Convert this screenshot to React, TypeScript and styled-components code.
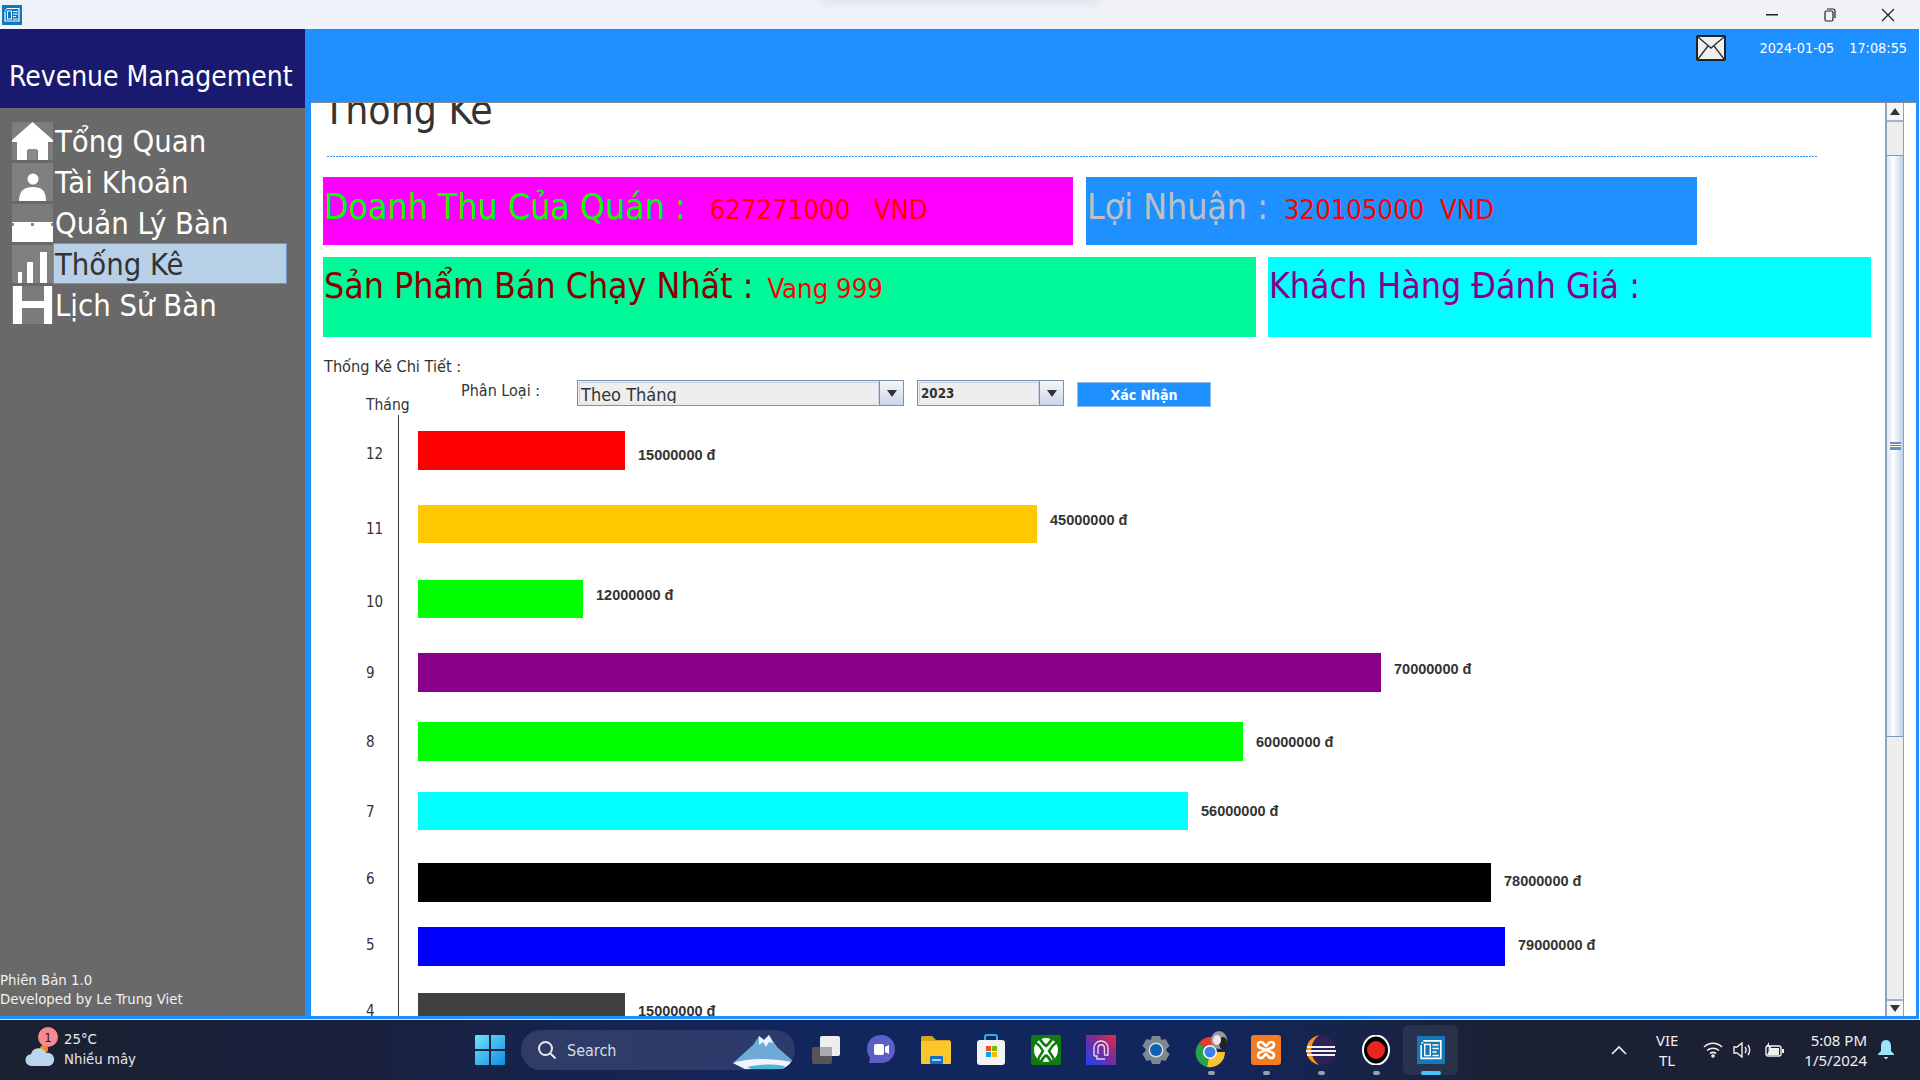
import React from 'react';
import styled, { createGlobalStyle } from 'styled-components';

const GlobalStyle = createGlobalStyle`
    html, body {
        margin: 0;
        padding: 0;
        background: #fff;
    }
    * {
        box-sizing: border-box;
    }
`;

const Page = styled.div`
    width: 1920px;
    height: 1080px;
    display: flex;
    flex-direction: column;
    overflow: hidden;
    font-family: 'DejaVu Sans', Verdana, sans-serif;
    font-stretch: condensed;
    color: #333;
`;

const TitleBar = styled.div`
    position: relative;
    height: 29px;
    flex: none;
    display: flex;
    align-items: center;
    justify-content: space-between;
    padding: 0 3px 0 2px;
    background: linear-gradient(90deg, #eef2fb 0%, #eef2fb 52%, #f1f2f7 60%, #f1f2f7 100%);
`;

// soft shadow of a window that hangs over the top of the screen
const TitleShadow = styled.div`
    position: absolute;
    top: -6px;
    left: 825px;
    width: 270px;
    height: 6px;
    box-shadow: 0 2px 6px 3px rgba(90, 90, 90, 0.07);
`;

const WindowButtons = styled.div`
    display: flex;
`;

const WindowButton = styled.div`
    width: 58px;
    height: 29px;
    display: flex;
    align-items: center;
    justify-content: center;
`;

const Main = styled.div`
    flex: 1;
    min-height: 0;
    display: flex;
    background: #1e90ff;
    padding-bottom: 3px;
    border-bottom: 1px solid #d8dde6;
    border-right: 1px solid #fff;
`;

const Sidebar = styled.div`
    width: 305px;
    flex: none;
    display: flex;
    flex-direction: column;
    background: #696969;
`;

const Brand = styled.div`
    height: 79px;
    flex: none;
    display: flex;
    align-items: center;
    padding: 15px 0 0 9px;
    background: #191970;
    color: #fff;
    font-size: 28px;
`;

const Nav = styled.div`
    flex: 1;
    display: flex;
    flex-direction: column;
    padding: 12px 0 0 12px;
`;

const NavRow = styled.div`
    height: 41px;
    display: flex;
    align-items: center;
`;

const NavLabel = styled.div<{ $selected?: boolean }>`
    width: 234px;
    height: 41px;
    padding-left: 1px;
    line-height: 42px;
    font-size: 30.7px;
    white-space: nowrap;
    color: ${(p) => (p.$selected ? '#333' : '#fff')};
    background: ${(p) => (p.$selected ? '#b8cfe8' : 'transparent')};
    border: 1px solid ${(p) => (p.$selected ? '#6f93c9' : 'transparent')};
`;

const SidebarFooter = styled.div`
    padding-bottom: 8px;
    color: #f2f2f2;
    font-size: 14.8px;
    line-height: 19px;
`;

const Workspace = styled.div`
    flex: 1;
    min-width: 0;
    display: flex;
    flex-direction: column;
`;

const TopBar = styled.div`
    height: 73px;
    flex: none;
    display: flex;
    align-items: flex-start;
    justify-content: flex-end;
    padding: 6px 12px 0 0;
    background: #1e90ff;
    color: #fff;
    font-size: 14.3px;
`;

const Clock = styled.div`
    display: flex;
    gap: 15px;
    margin: 5px 0 0 33px;
    white-space: nowrap;
`;

const ContentFrame = styled.div`
    flex: 1;
    min-height: 0;
    display: flex;
    margin: 0 3px 0 6px;
    background: #fff;
    border-top: 1px solid #8a8a8a;
    padding-right: 12px;
`;

const Viewport = styled.div`
    flex: 1;
    min-width: 0;
    overflow: hidden;
`;

const ScrollTrack = styled.div`
    width: 19px;
    flex: none;
    display: flex;
    flex-direction: column;
    background: #eee;
    border-left: 2px solid #8fa3c2;
    border-right: 1px solid #8f9fb5;
`;

const ScrollArrow = styled.div<{ $height: number }>`
    height: ${(p) => p.$height}px;
    flex: none;
    display: flex;
    align-items: center;
    justify-content: center;
    background: #f4f6f9;
    border-bottom: 2px solid #a3b2c9;
    &:last-child {
        border-bottom: none;
        border-top: 2px solid #a3b2c9;
    }
`;

const ScrollGap = styled.div<{ $grow?: boolean }>`
    height: 33px;
    flex: ${(p) => (p.$grow ? 1 : 'none')};
    background: #eeeeee;
`;

const ScrollThumb = styled.div`
    height: 582px;
    flex: none;
    display: flex;
    align-items: center;
    justify-content: center;
    background: linear-gradient(90deg, #d9e6f6 0%, #ffffff 40%, #bcd0e8 100%);
    border-top: 1px solid #7f97bd;
    border-bottom: 1px solid #7f97bd;
`;

const ScrollGrip = styled.div`
    width: 11px;
    height: 8px;
    background: linear-gradient(#6d8cc8 2px, #fff 2px, #fff 3px, #4f78c0 3px, #4f78c0 4px, #fff 4px, #fff 5px, #6d8cc8 5px, #6d8cc8 8px);
`;

const PageTitle = styled.h1`
    margin: -16px 0 0 12px;
    height: 46px;
    line-height: 46px;
    font-size: 40.5px;
    font-weight: 400;
    color: #333;
`;

const Divider = styled.div`
    width: 1491px;
    margin: 23px 0 0 16px;
    height: 1px;
    background: repeating-linear-gradient(90deg, #1e90ff 0, #1e90ff 2px, #fff 2px, #fff 3px);
`;

const CardRow = styled.div<{ $top: number; $gap: number }>`
    display: flex;
    gap: ${(p) => p.$gap}px;
    margin: ${(p) => p.$top}px 0 0 12px;
`;

const Card = styled.div<{ $bg: string; $width: number; $height: number; $pad: number }>`
    width: ${(p) => p.$width}px;
    height: ${(p) => p.$height}px;
    flex: none;
    display: flex;
    align-items: baseline;
    padding: ${(p) => p.$pad}px 0 0 1px;
    background: ${(p) => p.$bg};
    white-space: pre;
`;

const CardTitle = styled.span<{ $color: string }>`
    font-size: 35.4px;
    line-height: 44px;
    color: ${(p) => p.$color};
`;

const CardValue = styled.span<{ $indent: number }>`
    margin-left: ${(p) => p.$indent}px;
    font-size: 27.3px;
    color: #f00;
`;

const DetailHeading = styled.div`
    margin: 20px 0 0 13px;
    font-size: 16.2px;
    line-height: 20px;
    color: #333;
`;

const FilterRow = styled.div`
    height: 35px;
    display: flex;
    margin-top: 3px;
`;

const MonthHeading = styled.div`
    width: 95px;
    margin-left: 55px;
    padding-top: 15px;
    font-size: 15.5px;
    line-height: 20px;
`;

const FilterLabel = styled.div`
    width: 116px;
    padding-top: 1px;
    font-size: 16px;
    line-height: 20px;
`;

const Combo = styled.div<{ $width: number }>`
    width: ${(p) => p.$width}px;
    height: 26px;
    flex: none;
    display: flex;
    margin-right: 13px;
    border: 1px solid #7f8fa9;
    background: #eee;
`;

const ComboText = styled.div<{ $bold?: boolean }>`
    flex: 1;
    overflow: hidden;
    margin: 1px 0 0 1px;
    padding-left: 1px;
    border: 1px solid #c8d3e3;
    border-bottom-color: #dfe6ef;
    font-size: ${(p) => (p.$bold ? '13.3px' : '18px')};
    font-weight: ${(p) => (p.$bold ? 700 : 400)};
    line-height: ${(p) => (p.$bold ? '21px' : '23px')};
    height: 22px;
    color: #333;
`;

const ComboArrow = styled.div`
    width: 24px;
    flex: none;
    display: flex;
    align-items: center;
    justify-content: center;
    background: linear-gradient(#f5f7fa, #c9d7ea);
    border-left: 1px solid #7f8fa9;
`;

const ConfirmButton = styled.div`
    width: 134px;
    height: 25px;
    margin-top: 2px;
    display: flex;
    align-items: center;
    justify-content: center;
    background: #1e90ff;
    border: 1px solid #8fb8e8;
    color: #fff;
    font-size: 14px;
    font-weight: 700;
`;

const ChartRow = styled.div`
    display: flex;
    margin-left: 55px;
`;

const MonthCell = styled.div<{ $gap: number; $height: number }>`
    width: 32px;
    flex: none;
    padding-top: ${(p) => p.$gap}px;
    height: ${(p) => p.$gap + p.$height}px;
    display: flex;
    align-items: center;
`;

const MonthText = styled.span<{ $shift: number }>`
    margin-top: ${(p) => p.$shift * 2}px;
    font-size: 15px;
    color: #333;
`;

const BarCell = styled.div<{ $gap: number }>`
    flex: 1;
    display: flex;
    align-items: center;
    padding: ${(p) => p.$gap}px 0 0 19px;
    border-left: 1px solid #333;
`;

const Bar = styled.div<{ $color: string; $height: number }>`
    height: ${(p) => p.$height}px;
    flex: none;
    background: ${(p) => p.$color};
`;

const BarValue = styled.span<{ $shift: number }>`
    margin: ${(p) => p.$shift * 2}px 0 0 13px;
    font-family: 'Liberation Sans', Arial, sans-serif;
    font-size: 14.5px;
    font-weight: 700;
    color: #333;
    white-space: nowrap;
`;

const Taskbar = styled.div`
    height: 60px;
    flex: none;
    display: flex;
    align-items: center;
    background: linear-gradient(90deg, #1b2131 0%, #1a2140 20%, #12265e 42%, #12265e 62%, #1b2236 78%, #1b2131 100%);
    color: #fff;
`;

const Weather = styled.div`
    width: 475px;
    flex: none;
    display: flex;
    align-items: center;
    padding-left: 25px;
`;

const WeatherIcon = styled.div`
    position: relative;
    width: 30px;
    height: 30px;
    margin: 4px 9px 0 0;
`;

const Badge = styled.div`
    position: absolute;
    top: -10px;
    left: 13px;
    width: 20px;
    height: 20px;
    border-radius: 50%;
    display: flex;
    align-items: center;
    justify-content: center;
    background: #f78a8f;
    color: #222;
    font-size: 13px;
`;

const WeatherText = styled.div`
    font-size: 14.8px;
    line-height: 20px;
    margin-top: -2px;
    color: #e8e8e8;
`;

const SearchBox = styled.div`
    width: 274px;
    height: 40px;
    flex: none;
    display: flex;
    align-items: center;
    margin-left: 16px;
    padding-left: 16px;
    border-radius: 20px;
    background: linear-gradient(90deg, #303c66, #2c3a6c);
    font-size: 16px;
    color: #d8dbe6;
    overflow: hidden;
`;

const SearchLabel = styled.span`
    flex: 1;
    margin-left: 10px;
`;

const AppSlot = styled.div<{ $active?: boolean }>`
    position: relative;
    width: 55px;
    height: 50px;
    flex: none;
    display: flex;
    align-items: center;
    justify-content: center;
    border-radius: 6px;
    background: ${(p) => (p.$active ? 'rgba(255,255,255,0.07)' : 'transparent')};
`;

const RunDot = styled.div<{ $active?: boolean }>`
    position: absolute;
    bottom: 0;
    left: 50%;
    width: ${(p) => (p.$active ? 20 : 7)}px;
    height: 4px;
    margin-left: ${(p) => (p.$active ? -10 : -3)}px;
    border-radius: 2px;
    background: ${(p) => (p.$active ? '#4cc2ff' : '#9aa0ab')};
`;

const AppStrip = styled.div`
    display: flex;
    margin-left: 3px;
`;

const Tray = styled.div`
    flex: 1;
    display: flex;
    align-items: center;
    justify-content: flex-end;
    font-size: 15px;
    color: #f0f0f0;
`;

const TrayItem = styled.div<{ $right: number }>`
    display: flex;
    align-items: center;
    margin-right: ${(p) => p.$right}px;
`;

const Lang = styled.div`
    text-align: center;
    line-height: 20px;
    font-family: 'Noto Sans', sans-serif;
`;

const DateTime = styled.div`
    text-align: right;
    line-height: 20px;
    font-family: 'Noto Sans', sans-serif;
`;

const appIcon = (size: number) => (
    <svg width={size} height={size} viewBox="0 0 20 20">
        <rect width="20" height="20" fill="#0f79b9" />
        <path d="M3 5h1.5M4.5 3.5H17V16H3V6.5" fill="none" stroke="#fff" strokeWidth="1.2" />
        <rect x="5.5" y="6" width="4" height="8" fill="none" stroke="#fff" strokeWidth="1" />
        <path d="M11 6.5h4.5M11 9h4.5M11 11.5h3M11 14h4.5" stroke="#fff" strokeWidth="1.1" />
    </svg>
);

const NavIcon: React.FC<{ children: React.ReactNode }> = ({ children }) => (
    <svg width="41" height="38" viewBox="0 0 41 38" style={{ flex: 'none' }}>
        {children}
    </svg>
);

const navItems = [
    {
        label: 'Tổng Quan',
        icon: (
            <>
                <rect width="41" height="38" fill="#7d7d7d" />
                <path d="M0 18 20.5 0 41 18v2h-5v18H26V28H15v10H5V20H0z" fill="#fff" />
                <rect x="16" y="27" width="9" height="11" fill="#8a8a8a" />
            </>
        ),
    },
    {
        label: 'Tài Khoản',
        icon: (
            <>
                <rect width="41" height="38" fill="#808080" />
                <circle cx="21" cy="16" r="5.5" fill="#fff" />
                <path d="M7 38c0-11 6-14 14-14s13 3 13 14z" fill="#fff" />
            </>
        ),
    },
    {
        label: 'Quản Lý Bàn',
        icon: (
            <>
                <rect width="41" height="18" fill="#7b7b7b" />
                <rect y="18" width="41" height="20" fill="#fff" />
                <path d="M0 19h2v3H0zM19 19h3v3h-3zM39 19h2v3h-2z" fill="#888" />
            </>
        ),
    },
    {
        label: 'Thống Kê',
        selected: true,
        icon: (
            <>
                <rect width="41" height="38" fill="#808080" />
                <rect x="6" y="27" width="4" height="11" fill="#fff" />
                <rect x="15" y="17" width="6" height="21" fill="#fff" />
                <rect x="28" y="7" width="7" height="31" fill="#fff" />
            </>
        ),
    },
    {
        label: 'Lịch Sử Bàn',
        icon: (
            <>
                <rect width="41" height="38" fill="#7b7b7b" />
                <path d="M1 0h9v15h22V0h8v38h-8V22H10v16H1z" fill="#fff" />
            </>
        ),
    },
];

interface IBarRow {
    month: number;
    value: string;
    color: string;
    width: number;
    gap: number;
    height: number;
    monthShift: number;
    valueShift: number;
}

const barRows: IBarRow[] = [
    { month: 12, value: '15000000 đ', color: '#ff0000', width: 207, gap: 16, height: 39, monthShift: 3, valueShift: 4 },
    { month: 11, value: '45000000 đ', color: '#ffc800', width: 619, gap: 35, height: 38, monthShift: 5, valueShift: -4 },
    { month: 10, value: '12000000 đ', color: '#00ff00', width: 165, gap: 37, height: 38, monthShift: 3, valueShift: -4 },
    { month: 9, value: '70000000 đ', color: '#8b008b', width: 963, gap: 35, height: 39, monthShift: 0, valueShift: -4 },
    { month: 8, value: '60000000 đ', color: '#00ff00', width: 825, gap: 30, height: 39, monthShift: 0, valueShift: 0 },
    { month: 7, value: '56000000 đ', color: '#00ffff', width: 770, gap: 31, height: 38, monthShift: 1, valueShift: 0 },
    { month: 6, value: '78000000 đ', color: '#000000', width: 1073, gap: 33, height: 39, monthShift: -4, valueShift: -2 },
    { month: 5, value: '79000000 đ', color: '#0000ff', width: 1087, gap: 25, height: 39, monthShift: -2, valueShift: -2 },
    { month: 4, value: '15000000 đ', color: '#404040', width: 207, gap: 27, height: 39, monthShift: -2, valueShift: -2 },
];

const ArrowDown: React.FC<{ size?: number; color?: string }> = ({ size = 10, color = '#333' }) => (
    <svg width={size} height={size * 0.7} viewBox="0 0 10 7">
        <path d="M0 0h10L5 7z" fill={color} />
    </svg>
);

const taskbarApps: { key: string; running?: boolean; active?: boolean; icon: React.ReactNode }[] = [
    {
        key: 'desktops',
        icon: (
            <svg width="30" height="30" viewBox="0 0 30 30">
                <rect x="1" y="12" width="20" height="17" rx="2" fill="#555" />
                <rect x="9" y="1" width="20" height="20" rx="2" fill="#eee" />
                <rect x="9" y="12" width="12" height="9" fill="#aaa" />
            </svg>
        ),
    },
    {
        key: 'meet',
        icon: (
            <svg width="30" height="32" viewBox="0 0 30 32">
                <path d="M15 1c8 0 14 6 14 14s-6 14-14 14H3l1-5C2 21 1 18 1 15 1 7 7 1 15 1z" fill="#5b5fc7" />
                <rect x="8" y="10" width="10" height="11" rx="2" fill="#fff" />
                <path d="m19 13 4-2v9l-4-2z" fill="#fff" />
            </svg>
        ),
    },
    {
        key: 'files',
        icon: (
            <svg width="32" height="30" viewBox="0 0 32 30">
                <path d="M1 3a2 2 0 0 1 2-2h9l4 4h14v5H1z" fill="#d9a520" />
                <rect x="1" y="6" width="30" height="23" rx="1" fill="#fcc72a" />
                <rect x="10" y="21" width="13" height="8" rx="1" fill="#1570c4" />
                <rect x="12" y="24" width="9" height="2" fill="#9fd0f5" />
            </svg>
        ),
    },
    {
        key: 'store',
        icon: (
            <svg width="30" height="32" viewBox="0 0 30 32">
                <path d="M9 9V3a2 2 0 0 1 2-2h8a2 2 0 0 1 2 2v6" fill="none" stroke="#2bb0e8" strokeWidth="2" />
                <rect x="1" y="6" width="28" height="25" rx="3" fill="#f3f3f3" />
                <rect x="10" y="12" width="5" height="5" fill="#f25022" />
                <rect x="16" y="12" width="5" height="5" fill="#7fba00" />
                <rect x="10" y="18" width="5" height="5" fill="#00a4ef" />
                <rect x="16" y="18" width="5" height="5" fill="#ffb900" />
            </svg>
        ),
    },
    {
        key: 'xbox',
        icon: (
            <svg width="30" height="30" viewBox="0 0 30 30">
                <rect width="30" height="30" rx="2" fill="#107c10" />
                <circle cx="15" cy="15" r="12" fill="#fff" />
                <path d="M7 1c3 5 5 8 8 10 3-2 5-5 8-10M4 7c3 2 6 5 8 9-3 4-5 8-6 12M26 7c-3 2-6 5-8 9 3 4 5 8 6 12M15 20c-3 3-5 5-6 9M15 20c3 3 5 5 6 9" fill="none" stroke="#107c10" strokeWidth="2.6" />
            </svg>
        ),
    },
    {
        key: 'studio',
        icon: (
            <svg width="30" height="30" viewBox="0 0 30 30">
                <defs>
                    <linearGradient id="studioBg" x1="0" y1="1" x2="1" y2="0">
                        <stop offset="0" stopColor="#1f45f0" />
                        <stop offset="0.55" stopColor="#7a2c9a" />
                        <stop offset="1" stopColor="#f0283c" />
                    </linearGradient>
                </defs>
                <rect width="30" height="30" fill="url(#studioBg)" />
                <path d="M8 21V13a7 7 0 0 1 14 0v7h-4M8 21h3v3h8" fill="none" stroke="#e9d8ef" strokeWidth="1.4" />
                <path d="M12 19v-6a3.200 3.200 0 0 1 6.400 0v6" fill="none" stroke="#e9d8ef" strokeWidth="1.4" />
            </svg>
        ),
    },
    {
        key: 'settings',
        icon: (
            <svg width="30" height="30" viewBox="0 0 30 30">
                <path d="M11 1h8l1.500 4 4-1 4 7-3 3v2l3 3-4 7-4-1-1.500 4h-8l-1.500-4-4 1-4-7 3-3v-2l-3-3 4-7 4 1z" fill="#7d8791" />
                <circle cx="15" cy="15" r="7.500" fill="#d5dde4" />
                <circle cx="15" cy="15" r="6" fill="#0f62b0" />
            </svg>
        ),
    },
    {
        key: 'chrome',
        running: true,
        icon: (
            <svg width="32" height="38" viewBox="0 0 32 38">
                <g transform="translate(0 6)">
                    <path d="M15 15 4 6a15 15 0 0 1 25 1z" fill="#e33b2e" />
                    <path d="M15 15 4 6a15 15 0 0 0 8 24z" fill="#2aa24a" />
                    <path d="M15 15h15a15 15 0 0 1-18 15z" fill="#fbc02d" />
                    <circle cx="15" cy="15" r="7" fill="#fff" />
                    <circle cx="15" cy="15" r="5.500" fill="#3f80e8" />
                </g>
                <ellipse cx="24" cy="9" rx="8" ry="9" fill="#999" />
                <ellipse cx="28" cy="12" rx="4" ry="6" fill="#222" />
                <ellipse cx="22" cy="9" rx="4" ry="5" fill="#e8e8e8" />
            </svg>
        ),
    },
    {
        key: 'xampp',
        running: true,
        icon: (
            <svg width="30" height="30" viewBox="0 0 30 30">
                <rect width="30" height="30" rx="3" fill="#f37b20" />
                <path d="M10 7c-4 0-4 5 0 6l5 2 5-2c4-1 4-6 0-6-3 0-3 3-5 4-2-1-2-4-5-4zM10 23c-4 0-4-5 0-6l5-2 5 2c4 1 4 6 0 6-3 0-3-3-5-4-2 1-2 4-5 4z" fill="none" stroke="#fff" strokeWidth="2.6" />
            </svg>
        ),
    },
    {
        key: 'eclipse',
        running: true,
        icon: (
            <svg width="32" height="30" viewBox="0 0 32 30">
                <circle cx="16" cy="15" r="15" fill="#2c2255" />
                <path d="M14 0.200A15 15 0 0 0 14 29.800 18 18 0 0 1 14 .2z" fill="#f7941e" />
                <path d="M2 11h28v2H2zM1 15h30v2H1zM2 19h28v2H2z" fill="#f2f2f2" />
            </svg>
        ),
    },
    {
        key: 'record',
        running: true,
        icon: (
            <svg width="28" height="30" viewBox="0 0 28 30">
                <ellipse cx="14" cy="15" rx="13" ry="14.500" fill="#000" stroke="#fff" strokeWidth="2" />
                <circle cx="14" cy="15" r="9" fill="#e8251f" />
            </svg>
        ),
    },
    { key: 'revenue', active: true, icon: appIcon(28) },
];

const App: React.FC = () => {
    return (
        <Page>
            <GlobalStyle />
            <TitleBar>
                <TitleShadow />
                {appIcon(20)}
                <WindowButtons>
                    <WindowButton>
                        <svg width="12" height="2" viewBox="0 0 12 2">
                            <rect width="12" height="1.500" fill="#222" />
                        </svg>
                    </WindowButton>
                    <WindowButton>
                        <svg width="12" height="14" viewBox="0 0 12 14" fill="none" stroke="#222" strokeWidth="1.2">
                            <rect x="1" y="3" width="8" height="10" rx="1.500" />
                            <path d="M3 1h6a2 2 0 0 1 2 2v7" />
                        </svg>
                    </WindowButton>
                    <WindowButton>
                        <svg width="14" height="14" viewBox="0 0 14 14" stroke="#222" strokeWidth="1.2">
                            <path d="M1 1l12 12M13 1 1 13" />
                        </svg>
                    </WindowButton>
                </WindowButtons>
            </TitleBar>

            <Main>
                <Sidebar>
                    <Brand>Revenue Management</Brand>
                    <Nav>
                        {navItems.map((item) => (
                            <NavRow key={item.label}>
                                <NavIcon>{item.icon}</NavIcon>
                                <NavLabel $selected={item.selected}>{item.label}</NavLabel>
                            </NavRow>
                        ))}
                    </Nav>
                    <SidebarFooter>
                        Phiên Bản 1.0
                        <br />
                        Developed by Le Trung Viet
                    </SidebarFooter>
                </Sidebar>

                <Workspace>
                    <TopBar>
                        <svg width="30" height="26" viewBox="0 0 30 26">
                            <rect x="1" y="1" width="28" height="24" rx="1" fill="#f0f0f0" stroke="#222" strokeWidth="2" />
                            <path d="M2 2 15 13 28 2M2 24l10-13M28 24 18 11" fill="none" stroke="#333" strokeWidth="1.4" />
                        </svg>
                        <Clock>
                            <span>2024-01-05</span>
                            <span>17:08:55</span>
                        </Clock>
                    </TopBar>

                    <ContentFrame>
                        <Viewport>
                            <PageTitle>Thống Kê</PageTitle>
                            <Divider />
                            <CardRow $top={20} $gap={13}>
                                <Card $bg="#ff00ff" $width={750} $height={68} $pad={8}>
                                    <CardTitle $color="#00ff00">Doanh Thu Của Quán :</CardTitle>
                                    <CardValue $indent={24}>627271000   VND</CardValue>
                                </Card>
                                <Card $bg="#1e90ff" $width={611} $height={68} $pad={8}>
                                    <CardTitle $color="#c0c0c0">Lợi Nhuận :</CardTitle>
                                    <CardValue $indent={16}>320105000  VND</CardValue>
                                </Card>
                            </CardRow>
                            <CardRow $top={12} $gap={12}>
                                <Card $bg="#00fa9a" $width={933} $height={80} $pad={7}>
                                    <CardTitle $color="#8b0000">Sản Phẩm Bán Chạy Nhất :</CardTitle>
                                    <CardValue $indent={14}>Vang 999</CardValue>
                                </Card>
                                <Card $bg="#00ffff" $width={603} $height={80} $pad={7}>
                                    <CardTitle $color="#8b008b">Khách Hàng Đánh Giá :</CardTitle>
                                </Card>
                            </CardRow>

                            <DetailHeading>Thống Kê Chi Tiết :</DetailHeading>
                            <FilterRow>
                                <MonthHeading>Tháng</MonthHeading>
                                <FilterLabel>Phân Loại :</FilterLabel>
                                <Combo $width={327}>
                                    <ComboText>Theo Tháng</ComboText>
                                    <ComboArrow>
                                        <ArrowDown />
                                    </ComboArrow>
                                </Combo>
                                <Combo $width={147}>
                                    <ComboText $bold>2023</ComboText>
                                    <ComboArrow>
                                        <ArrowDown />
                                    </ComboArrow>
                                </Combo>
                                <ConfirmButton>Xác Nhận</ConfirmButton>
                            </FilterRow>

                            {barRows.map((row) => (
                                <ChartRow key={row.month}>
                                    <MonthCell $gap={row.gap} $height={row.height}>
                                        <MonthText $shift={row.monthShift}>{row.month}</MonthText>
                                    </MonthCell>
                                    <BarCell $gap={row.gap}>
                                        <Bar $color={row.color} $height={row.height} style={{ width: row.width }} />
                                        <BarValue $shift={row.valueShift}>{row.value}</BarValue>
                                    </BarCell>
                                </ChartRow>
                            ))}
                        </Viewport>

                        <ScrollTrack>
                            <ScrollArrow $height={19}>
                                <svg width="10" height="7" viewBox="0 0 10 7">
                                    <path d="M0 7h10L5 0z" fill="#333" />
                                </svg>
                            </ScrollArrow>
                            <ScrollGap />
                            <ScrollThumb>
                                <ScrollGrip />
                            </ScrollThumb>
                            <ScrollGap $grow />
                            <ScrollArrow $height={17}>
                                <ArrowDown />
                            </ScrollArrow>
                        </ScrollTrack>
                    </ContentFrame>
                </Workspace>
            </Main>

            <Taskbar>
                <Weather>
                    <WeatherIcon>
                        <svg width="30" height="22" viewBox="0 0 30 22" style={{ marginTop: 8 }}>
                            <circle cx="19" cy="4" r="4" fill="#f08a24" />
                            <path d="M7 21a6 6 0 0 1-1-12 8 8 0 0 1 15-1 6.500 6.500 0 0 1 3 13z" fill="#bcd5ef" />
                        </svg>
                        <Badge>1</Badge>
                    </WeatherIcon>
                    <WeatherText>
                        25°C
                        <br />
                        Nhiều mây
                    </WeatherText>
                </Weather>
                <svg width="30" height="30" viewBox="0 0 30 30">
                    <defs>
                        <linearGradient id="winLogo" x1="0" y1="0" x2="1" y2="1">
                            <stop offset="0" stopColor="#6fe3fb" />
                            <stop offset="1" stopColor="#0f8fe0" />
                        </linearGradient>
                    </defs>
                    <path d="M0 1a1 1 0 0 1 1-1h13v14H0zM16 0h13a1 1 0 0 1 1 1v13H16zM0 16h14v14H1a1 1 0 0 1-1-1zM16 16h14v13a1 1 0 0 1-1 1H16z" fill="url(#winLogo)" />
                </svg>
                <SearchBox>
                    <svg width="20" height="20" viewBox="0 0 20 20" fill="none" stroke="#e8e8e8" strokeWidth="2">
                        <circle cx="8.500" cy="8.500" r="6.500" />
                        <path d="m13.500 13.500 5 5" />
                    </svg>
                    <SearchLabel>Search</SearchLabel>
                    <svg width="64" height="38" viewBox="0 0 64 38">
                        <path d="M2 32 22 14l6-9 5 4 5-5 8 12 16 14-10 8H14z" fill="#6fa9d6" />
                        <path d="m28 5 5 4 5-5 4 8-4-1-3 5-3-5-4 3z" fill="#eaf4fb" />
                        <path d="M2 32c16-5 34-5 60-1l-8 7H14z" fill="#f0f6fb" />
                        <path d="M16 36c10-3 24-3 38-1l-3 3H20z" fill="#4fb5d8" />
                    </svg>
                </SearchBox>
                <AppStrip>
                    {taskbarApps.map((app) => (
                        <AppSlot key={app.key} $active={app.active}>
                            {app.icon}
                            {(app.running || app.active) && <RunDot $active={app.active} />}
                        </AppSlot>
                    ))}
                </AppStrip>
                <Tray>
                    <TrayItem $right={29}>
                        <svg width="16" height="10" viewBox="0 0 16 10" fill="none" stroke="#f0f0f0" strokeWidth="1.6">
                            <path d="M1 9l7-7 7 7" />
                        </svg>
                    </TrayItem>
                    <TrayItem $right={25}>
                        <Lang>
                            VIE
                            <br />
                            TL
                        </Lang>
                    </TrayItem>
                    <TrayItem $right={10}>
                        <svg width="20" height="16" viewBox="0 0 20 16" fill="none" stroke="#f0f0f0" strokeWidth="1.6">
                            <path d="M1 5c5-5 13-5 18 0M4 8.500c3.500-3 8.500-3 12 0M7 11.500c2-1.500 4-1.500 6 0" />
                            <circle cx="10" cy="14" r="1" fill="#f0f0f0" />
                        </svg>
                    </TrayItem>
                    <TrayItem $right={12}>
                        <svg width="20" height="16" viewBox="0 0 20 16" fill="none" stroke="#f0f0f0" strokeWidth="1.4">
                            <path d="M1 5h3l5-4v14l-5-4H1z" />
                            <path d="M12 5c1.500 2 1.500 4 0 6M15 3c2 3 2 7 0 10" />
                        </svg>
                    </TrayItem>
                    <TrayItem $right={19}>
                        <svg width="20" height="16" viewBox="0 0 20 16">
                            <rect x="1" y="4" width="15" height="10" rx="2" fill="none" stroke="#f0f0f0" strokeWidth="1.4" />
                            <path d="M2 13l3-7h9v7z" fill="#f0f0f0" />
                            <rect x="17" y="7" width="2" height="4" fill="#f0f0f0" />
                            <path d="M4 0 1 5h3L3 9l4-5H4z" fill="#f0f0f0" />
                        </svg>
                    </TrayItem>
                    <TrayItem $right={11}>
                        <DateTime>
                            5:08 PM
                            <br />
                            1/5/2024
                        </DateTime>
                    </TrayItem>
                    <TrayItem $right={26}>
                        <svg width="16" height="20" viewBox="0 0 16 20">
                            <path d="M8 0c3.500 0 5 3 5 6v5l3 3v1H0v-1l3-3V6c0-3 1.500-6 5-6z" fill="#9fe3fb" />
                            <path d="M5.500 17h5l-2.500 2.500z" fill="#9fe3fb" />
                        </svg>
                    </TrayItem>
                </Tray>
            </Taskbar>
        </Page>
    );
};

export default App;
